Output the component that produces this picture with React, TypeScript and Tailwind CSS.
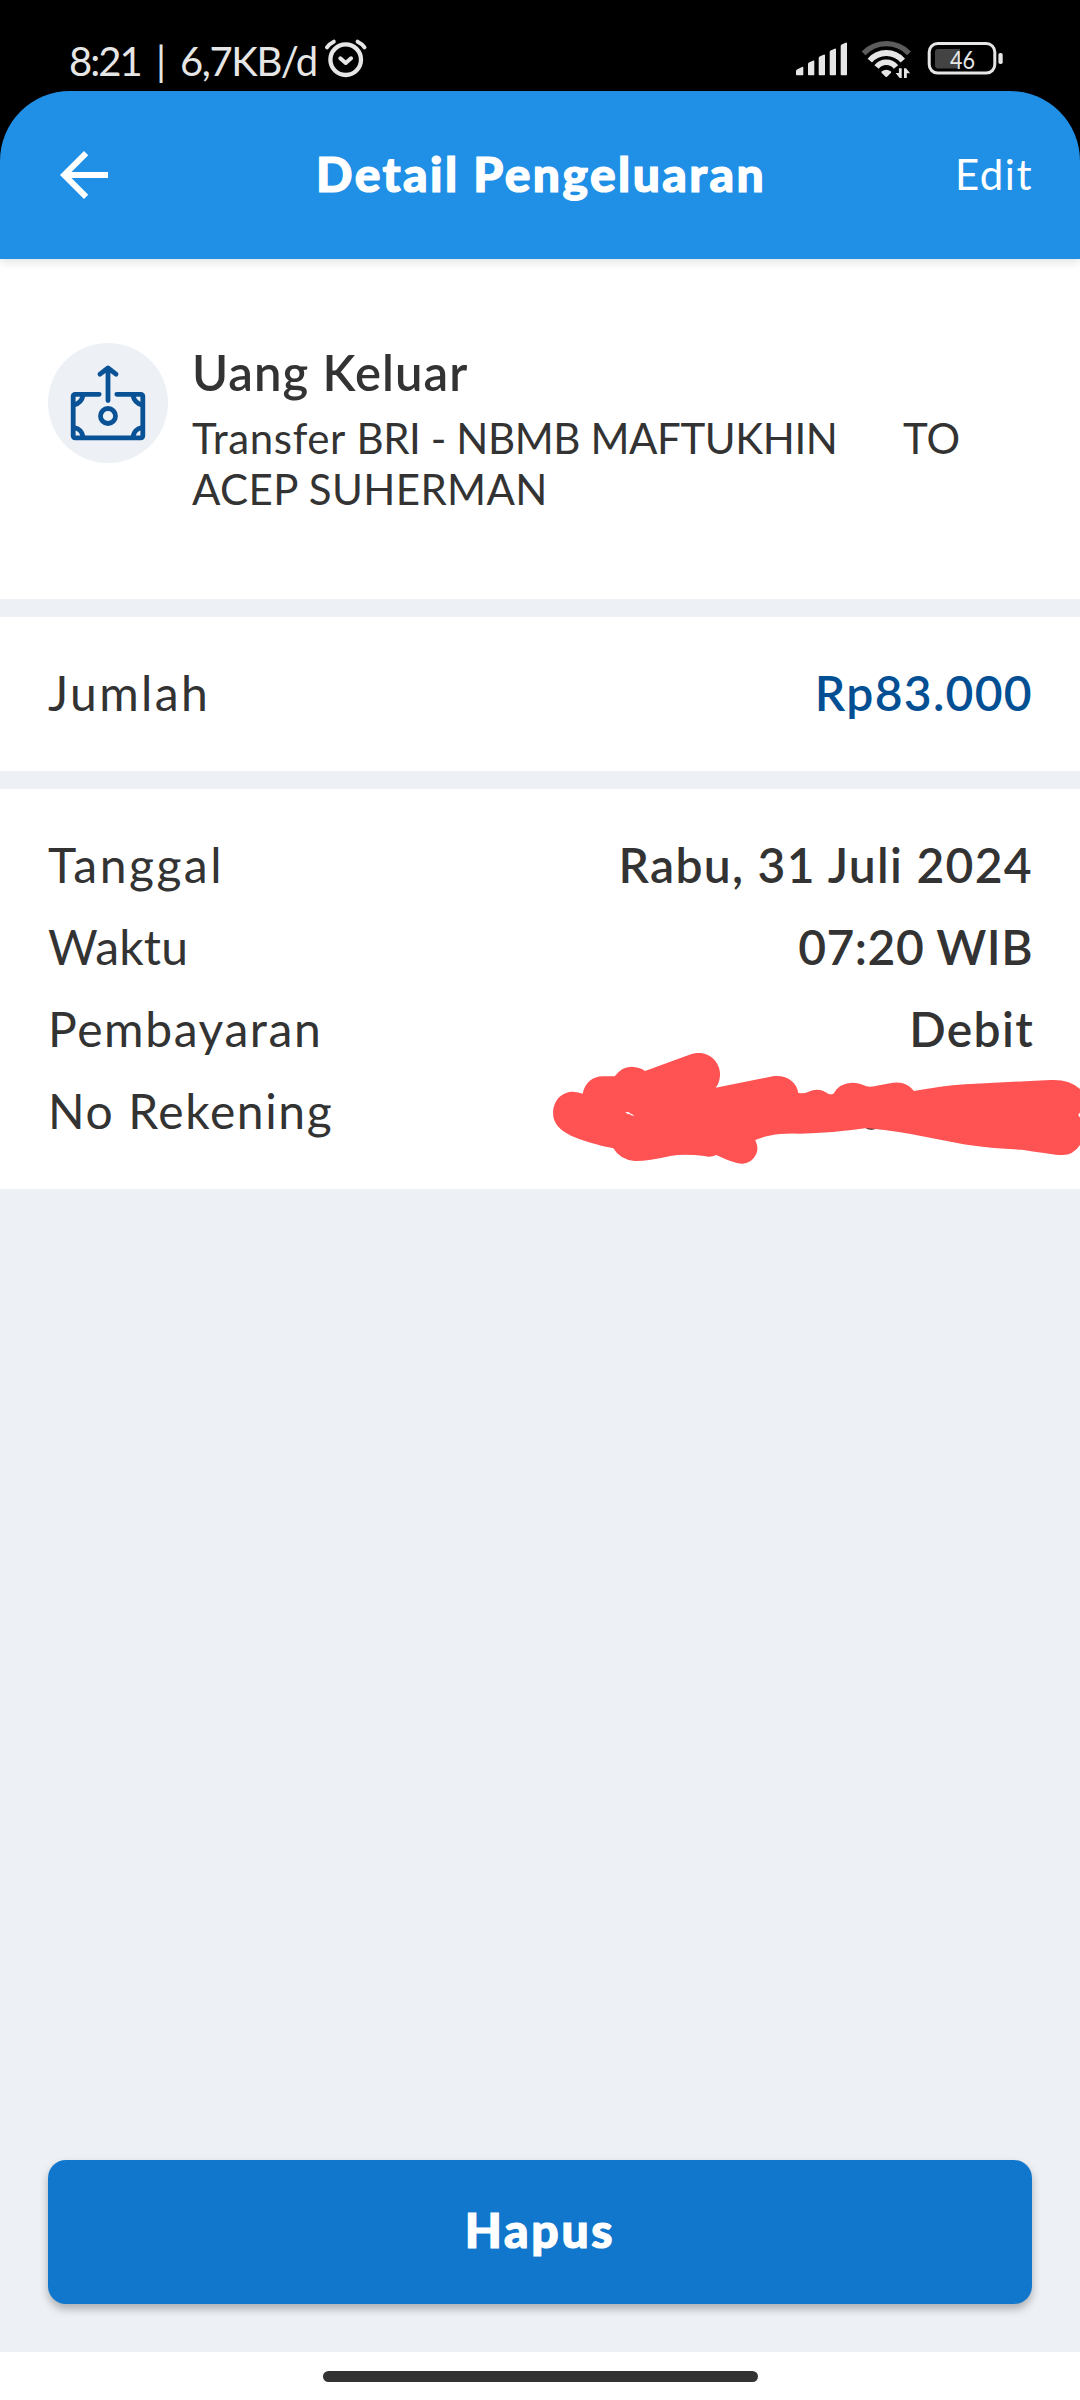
import React from 'react';

interface DetailRow {
  label: string;
  value: string;
  labelClass: string;
  valueClass: string;
}

const rows: DetailRow[] = [
  { label: 'Tanggal', value: 'Rabu, 31 Juli 2024', labelClass: 'tracking-[2.5px]', valueClass: 'tracking-[1.3px] -mr-px' },
  { label: 'Waktu', value: '07:20 WIB', labelClass: 'tracking-[0.2px]', valueClass: 'tracking-[0.5px] -mr-px' },
  { label: 'Pembayaran', value: 'Debit', labelClass: 'tracking-[1.6px]', valueClass: 'tracking-[1.3px] -mr-0.5' },
  { label: 'No Rekening', value: '', labelClass: 'tracking-[1.6px]', valueClass: '' },
];

const AlarmIcon = () => (
  <svg width="44" height="40" viewBox="0 0 44 40" fill="none" stroke="#e6e6e6">
    <circle cx="21.7" cy="21.7" r="15.3" strokeWidth="4.300" />
    <path d="M16.300 20.300l5.400 4.700 5.400-4.700" strokeWidth="4" strokeLinecap="round" strokeLinejoin="round" />
    <path d="M3 9.300Q5.500 5.800 9.800 3.700M40.500 9.300Q38 5.800 33.600 3.700" strokeWidth="4" strokeLinecap="round" />
  </svg>
);

const SignalIcon = () => (
  <svg width="52" height="40" viewBox="0 0 52 40" fill="#e6e6e6">
    <path d="M0 34.500v-3.500q0-1 1-1.600l5-2.500q1.300-.5 1.300.9v6.700q0 .8-.8.8H.8q-.8 0-.8-.8z" />
    <path d="M12 34.500V24q0-1 .9-1.500l4-1.800q1.400-.5 1.400.8v13q0 .8-.8.8h-4.700q-.8 0-.8-.8z" />
    <path d="M22.700 34.500V18q0-1 .9-1.500l4-1.800q1.400-.5 1.400.8v19q0 .8-.8.8h-4.700q-.8 0-.8-.8z" />
    <path d="M33.700 34.500V12q0-1 .9-1.500l4-1.800q1.400-.5 1.400.8v25q0 .8-.8.8h-4.700q-.8 0-.8-.8z" />
    <path d="M44.700 34.500V6q0-1 .9-1.500l4-1.800q1.400-.5 1.400.8v31q0 .8-.8.8h-4.700q-.8 0-.8-.8z" />
  </svg>
);

const WifiIcon = () => (
  <svg width="50" height="40" viewBox="0 0 50 40" fill="none">
    <path d="M2.600 13.300A31.400 31.400 0 0 1 48 13.300" stroke="#5c5c5c" strokeWidth="5.400" />
    <path d="M8.800 20.600A21.700 21.700 0 0 1 41.800 20.600" stroke="#e6e6e6" strokeWidth="5.800" />
    <path d="M15.600 27A12.300 12.300 0 0 1 35 27" stroke="#e6e6e6" strokeWidth="5.600" />
    <path d="M20.500 31.500q4.800-3.600 9.600 0v1.300l-4.300 4.100q-.5.400-1 0l-4.300-4.100z" fill="#e6e6e6" />
    <path d="M40.700 28.300v9.600h-2l-4.100-5h3.300v-4.600zM43 37.900v-9.600h2l4.100 5h-3.300v4.600z" fill="#e6e6e6" />
  </svg>
);

const BatteryIcon = () => (
  <svg width="77" height="40" viewBox="0 0 77 40">
    <rect x="2.200" y="3.500" width="65.600" height="29.600" rx="8.500" fill="none" stroke="#e6e6e6" strokeWidth="3" />
    <path d="M33 9H11q-3 0-3 3v13.500q0 3 3 3h22z" fill="#434343" />
    <rect x="71.400" y="13" width="4.300" height="11" rx="1.800" fill="#e6e6e6" />
    <text x="23" y="29.300" fill="#e6e6e6" fontSize="24.500" textLength="25" lengthAdjust="spacingAndGlyphs">46</text>
  </svg>
);

const BackIcon = () => (
  <svg width="72" height="72" viewBox="0 0 24 24" fill="white">
    <path d="M20 11H7.830l5.590-5.590L12 4l-8 8 8 8 1.410-1.410L7.830 13H20v-2z" />
  </svg>
);

// Banknote with an arrow leaving through its top edge
const MoneyOutIcon = () => (
  <svg width="120" height="120" viewBox="0 0 120 120" fill="none" stroke="#0a5296" strokeWidth="4.800" strokeLinecap="round" strokeLinejoin="round">
    <path d="M51.200 51.300H27a1.800 1.800 0 0 0-1.800 1.800V93a1.800 1.800 0 0 0 1.800 1.800h66a1.800 1.800 0 0 0 1.800-1.800V53.100a1.800 1.800 0 0 0-1.800-1.800H68.800" />
    <path d="M60 57.500V26M52 31.200l8-6.200 8 6.200" />
    <circle cx="60" cy="73" r="7.500" />
    <path d="M26 61.800Q33.500 60 35 52.500M94 61.800Q86.500 60 85 52.500M26 84.500Q33.500 86 35 93.500M94 84.500Q86.500 86 85 93.500" />
  </svg>
);

// Hand-drawn marker covering the account number
const Scribble = () => (
  <svg className="absolute top-[241px] right-0" width="540" height="170" viewBox="0 0 1568 510" preserveAspectRatio="none">
    <ellipse cx="962" cy="291" rx="17" ry="8" fill="#222" />
    <path
      fill="#ff5252"
      d="M38 250C38 208 66 185 96 185Q112 186 124 191C130 158 154 139 182 139H217Q236 111 265 110Q290 111 305 123L438 73C484 56 523 92 523 133Q522 160 510 173L676 139C718 134 746 158 750 189Q768 191 780 185Q810 170 838 192Q846 194 852 191Q868 160 905 158Q930 159 948 169Q962 173 985 166L1025 158Q1065 153 1086 183Q1190 164 1250 162L1482 150Q1545 147 1575 185V245Q1556 252 1568 262V345Q1548 376 1515 375Q1490 374 1400 359Q1290 354 1230 343L1080 313Q1000 298 944 295Q850 309 755 311Q700 309 672 316Q645 321 625 330Q636 355 628 372Q614 402 585 401Q562 400 512 375Q494 384 478 378Q420 371 382 377Q310 394 275 393Q233 390 213 355Q135 338 90 317Q38 292 38 250Z"
    />
    <path fill="#fff" d="M247 247l10-1 4 4 6 2 7 7-9-3-5-4-4 1z" />
  </svg>
);

export default function App() {
  return (
    <div className="flex h-[2400px] w-[1080px] flex-col overflow-hidden bg-[#edf1f6] font-['Lato',sans-serif] text-[#333]">
      <div className="bg-black">
        <div className="flex h-[91px] items-start justify-between pt-[38px] pr-[76px] pl-[69px]">
          <div className="flex">
            <div className="flex w-[255px] text-[40px] leading-[46px] whitespace-pre text-[#e6e6e6]">
              <span className="w-[87px] tracking-[-2px]">8:21</span>
              <span className="w-6">|</span>
              <span className="tracking-[-1.4px]">6,7KB/d</span>
            </div>
            <AlarmIcon />
          </div>
          <div className="flex pt-0.5">
            <SignalIcon />
            <div className="mr-4 ml-[13px]">
              <WifiIcon />
            </div>
            <BatteryIcon />
          </div>
        </div>
        <header className="relative z-10 grid h-[168px] grid-cols-[220px_1fr_220px] items-center rounded-t-[70px] bg-[#208fe6] text-white shadow-[0_3px_10px_rgba(0,0,0,0.12)]">
          <button className="ml-12">
            <BackIcon />
          </button>
          <h1 className="-mr-0.5 pb-[3px] text-center text-[48px] leading-none font-black tracking-[2.4px] whitespace-nowrap [-webkit-text-stroke:1.2px_white]">
            Detail Pengeluaran
          </h1>
          <button className="mr-[47px] pb-0.5 text-right text-[42px] leading-none tracking-[1.5px]">Edit</button>
        </header>
      </div>

      <section className="flex h-[340px] shrink-0 gap-6 bg-white px-12 pt-[84px]">
        <div className="size-[120px] rounded-full bg-[#edf1f6]">
          <MoneyOutIcon />
        </div>
        <div className="flex flex-col">
          <h2 className="-mt-px text-[49px] leading-[60px] font-semibold tracking-[1.1px]">Uang Keluar</h2>
          <p className="mt-[11px] text-[42px] leading-[51px] whitespace-pre">
            <span className="tracking-[0.6px]">Transfer </span>
            <span className="tracking-[-0.4px]">BRI - NBMB MAFTUKHIN</span>
            {'      '}
            <span className="ml-px">TO</span>
            <br />
            <span className="tracking-[0.4px]">ACEP SUHERMAN</span>
          </p>
        </div>
      </section>

      <section className="mt-[18px] flex h-[154px] shrink-0 items-center justify-between bg-white px-12 pb-[2px] text-[48px]">
        <span className="tracking-[2.4px]">Jumlah</span>
        <span className="-mr-px font-semibold tracking-[1.3px] text-[#034f94]">Rp83.000</span>
      </section>

      <section className="relative mt-[18px] flex h-[400px] shrink-0 flex-col bg-white px-12 pt-[35px] text-[48px]">
        {rows.map((row) => (
          <div key={row.label} className="flex h-[82px] items-center justify-between">
            <span className={row.labelClass}>{row.label}</span>
            <span className={`font-semibold ${row.valueClass}`}>{row.value}</span>
          </div>
        ))}
        <Scribble />
      </section>

      <div className="mt-auto px-12 pb-12">
        <button className="h-36 w-full rounded-[18px] bg-[#1077cc] pb-[5px] text-[48px] font-black tracking-[2.7px] text-white shadow-[0_5px_8px_rgba(0,0,0,0.28)] [-webkit-text-stroke:1.2px_white]">
          Hapus
        </button>
      </div>
      <div className="flex h-12 shrink-0 justify-center bg-white pt-[19px]">
        <div className="h-[11px] w-[435px] rounded-full bg-[#333]" />
      </div>
    </div>
  );
}
